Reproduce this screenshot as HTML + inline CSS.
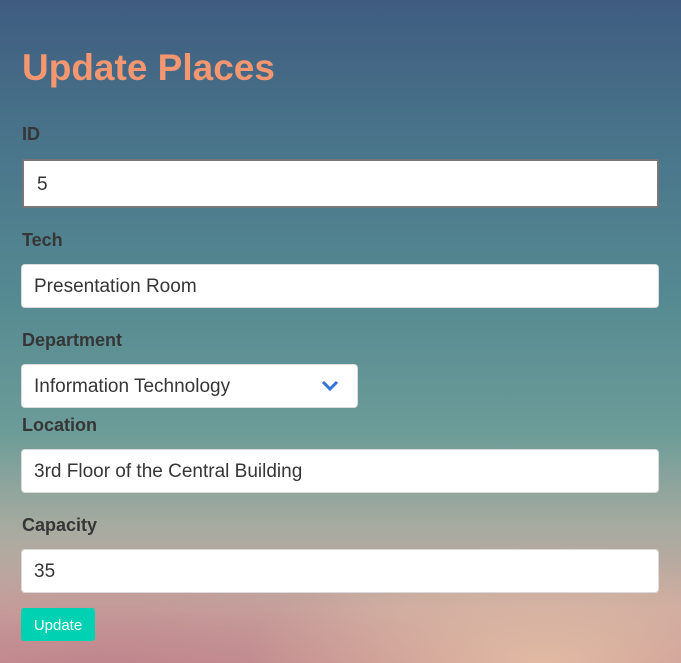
<!DOCTYPE html>
<html><head><style>
html,body{margin:0;width:681px;height:663px;overflow:hidden}
body{font-family:"Liberation Sans",sans-serif;position:relative;
background:
radial-gradient(ellipse 300px 120px at 80% 100%, rgba(232,196,168,.8), transparent),
radial-gradient(ellipse 350px 100px at 15% 100%, rgba(190,130,140,.7), transparent),
linear-gradient(180deg,#3f5c80 0%,#48738a 20%,#558a92 45%,#6c9c98 65%,#a9aba0 80%,#c8a59e 92%,#c59292 100%);}
h1{position:absolute;left:22px;top:47px;margin:0;font-size:37px;font-weight:bold;color:#f4966f;line-height:42px}
label{position:absolute;left:22px;font-size:18px;font-weight:bold;color:#363636;line-height:22px}
.in{position:absolute;left:21px;width:638px;height:44px;background:#fff;border:1px solid #dbdbdb;border-radius:4px;box-sizing:border-box;font-size:19px;color:#363636;padding-left:12px;line-height:44px}
.btn{position:absolute;left:21px;top:608px;width:74px;height:33px;background:#00d1b2;border-radius:3px;color:#fff;font-size:15px;line-height:35px;text-align:center}
</style></head><body>
<h1>Update Places</h1>
<label style="top:123px">ID</label>
<div class="in" style="top:159px;left:22px;width:637px;border:2px solid #777;border-radius:2px;height:49px;padding-left:13px;line-height:48px">5</div>
<label style="top:229px">Tech</label>
<div class="in" style="top:264px">Presentation Room</div>
<label style="top:329px">Department</label>
<div class="in" style="top:364px;width:337px">Information Technology
<svg style="position:absolute;right:18px;top:15px" width="18" height="12" viewBox="0 0 18 12"><path d="M2 2l7 7 7-7" stroke="#3273dc" stroke-width="3" fill="none"/></svg></div>
<label style="top:414px">Location</label>
<div class="in" style="top:449px">3rd Floor of the Central Building</div>
<label style="top:514px">Capacity</label>
<div class="in" style="top:549px">35</div>
<div class="btn">Update</div>
</body></html>
